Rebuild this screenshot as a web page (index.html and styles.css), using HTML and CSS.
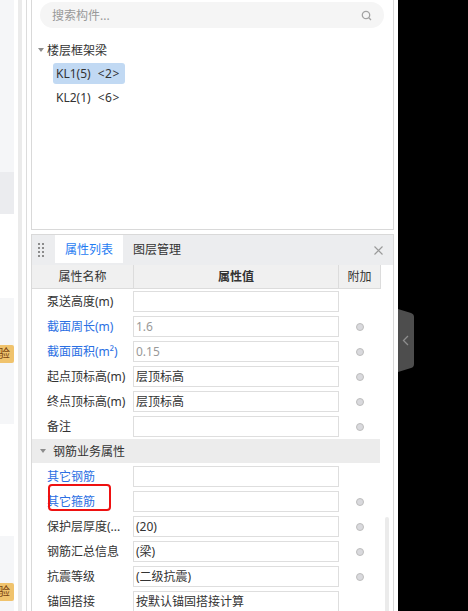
FILE: index.html
```html
<!DOCTYPE html>
<html lang="zh">
<head>
<meta charset="utf-8">
<title>属性列表</title>
<link rel="stylesheet" href="styles.css">
</head>
<body>
<div class="shell">
  <aside class="side">
    <div class="s s-a"></div>
    <div class="s s-b"></div>
    <div class="s s-c"></div>
    <div class="s s-d"><span class="badge">验</span></div>
    <div class="s s-e"></div>
    <div class="s s-f"><span class="badge">验</span></div>
  </aside>
  <div class="rails"><i class="band"></i><i class="line"></i></div>
  <main class="main">
    <section class="tree-panel">
      <div class="search">
        <span class="search-text">搜索构件...</span>
        <svg class="search-icon" width="11" height="11" viewBox="0 0 11 11"><circle cx="5" cy="5" r="3.7" fill="none" stroke="#a3a3a3" stroke-width="1.3"/><path d="M7.8 7.8 10 10" stroke="#a3a3a3" stroke-width="1.3"/></svg>
      </div>
      <div class="tree-head"><i class="caret"></i><span>楼层框架梁</span></div>
      <div class="tree-item selected">KL1(5)<span class="tag">&lt;2&gt;</span></div>
      <div class="tree-item">KL2(1)<span class="tag">&lt;6&gt;</span></div>
    </section>
    <section class="prop-panel">
      <div class="tabbar">
        <svg class="grip" width="6" height="15" viewBox="0 0 6 15"><g fill="#8c8c8c"><rect width="2" height="2"/><rect x="4" width="2" height="2"/><rect y="4" width="2" height="2"/><rect x="4" y="4" width="2" height="2"/><rect y="8" width="2" height="2"/><rect x="4" y="8" width="2" height="2"/><rect y="12" width="2" height="2"/><rect x="4" y="12" width="2" height="2"/></g></svg>
        <div class="tab active">属性列表</div>
        <div class="tab">图层管理</div>
        <svg class="close" width="9" height="9" viewBox="0 0 9 9"><path d="M.5.5l8 8M8.500.5l-8 8" stroke="#9a9a9a" stroke-width="1.1" fill="none"/></svg>
      </div>
      <div class="grid head">
        <div class="hc">属性名称</div>
        <div class="hc strong">属性值</div>
        <div class="hc last">附加</div>
      </div>
      <div class="grid row"><div class="label">泵送高度(m)</div><div class="input"></div><div class="add"></div></div>
      <div class="grid row"><div class="label link">截面周长(m)</div><div class="input muted">1.6</div><div class="add"><i class="dot"></i></div></div>
      <div class="grid row"><div class="label link">截面面积(m²)</div><div class="input muted">0.15</div><div class="add"><i class="dot"></i></div></div>
      <div class="grid row"><div class="label">起点顶标高(m)</div><div class="input">层顶标高</div><div class="add"><i class="dot"></i></div></div>
      <div class="grid row"><div class="label">终点顶标高(m)</div><div class="input">层顶标高</div><div class="add"><i class="dot"></i></div></div>
      <div class="grid row"><div class="label">备注</div><div class="input"></div><div class="add"><i class="dot"></i></div></div>
      <div class="section-row"><i class="caret"></i><span>钢筋业务属性</span></div>
      <div class="grid row"><div class="label link">其它钢筋</div><div class="input"></div><div class="add"></div></div>
      <div class="grid row"><div class="label link">其它箍筋<span class="mark"></span></div><div class="input"></div><div class="add"><i class="dot"></i></div></div>
      <div class="grid row"><div class="label">保护层厚度(...</div><div class="input">(20)</div><div class="add"><i class="dot"></i></div></div>
      <div class="grid row"><div class="label">钢筋汇总信息</div><div class="input">(梁)</div><div class="add"><i class="dot"></i></div></div>
      <div class="grid row"><div class="label">抗震等级</div><div class="input">(二级抗震)</div><div class="add"><i class="dot"></i></div></div>
      <div class="grid row"><div class="label">锚固搭接</div><div class="input">按默认锚固搭接计算</div><div class="add"></div></div>
      <div class="scrollbar"></div>
    </section>
  </main>
  <div class="backdrop">
    <svg class="handle" width="16" height="63" viewBox="0 0 16 63"><path d="M0 0 13 4Q16 5 16 8V55Q16 58 13 59L0 63Z" fill="#4d4d4d"/><path d="M10 27 5.500 31.500 10 36" fill="none" stroke="#8e8e8e" stroke-width="1.3"/></svg>
  </div>
</div>
</body>
</html>
```
FILE: styles.css
```css
* { box-sizing: border-box; }
html, body { margin: 0; padding: 0; }
body {
  font-family: "Noto Sans", "Noto Sans CJK SC", sans-serif;
  font-size: 12px;
  color: #333;
  background: #000;
}
.shell {
  display: flex;
  width: 468px;
  height: 611px;
  overflow: hidden;
  background: #000;
}
.side { width: 14px; flex: none; background: #fff; }
.s { overflow: hidden; }
.s-a { height: 172px; background: #f5f6f8; }
.s-b { height: 42px; background: #ebecef; }
.s-c { height: 84px; background: #fff; }
.s-d { height: 126px; padding-top: 47px; background: #f5f6f8; }
.s-e { height: 112px; background: #fff; }
.s-f { height: 75px; padding-top: 47px; background: #f5f6f8; }
.badge {
  display: block;
  width: 14px;
  height: 18px;
  line-height: 18px;
  text-indent: -2px;
  white-space: nowrap;
  overflow: hidden;
  color: #7a4510;
  background: #f0c36d;
  border-radius: 0 2px 2px 0;
}
.rails {
  display: flex;
  flex: none;
  width: 17px;
  padding-left: 4px;
  background: #fff;
}
.band { width: 4px; background: #ebebeb; }
.line { width: 1px; margin-left: 4px; background: #dcdcdc; }
.main {
  flex: none;
  width: 367px;
  padding-right: 4px;
  background: #fff;
}
.tree-panel {
  height: 230px;
  padding: 2px 9px 0 8px;
  border: 1px solid #d9d9d9;
  border-width: 0 1px 1px 1px;
}
.search {
  display: flex;
  align-items: center;
  justify-content: space-between;
  width: 344px;
  height: 26px;
  padding: 0 12px;
  background: #f5f5f5;
  border-radius: 13px;
}
.search-text { color: #999; }
.tree-head {
  display: flex;
  align-items: center;
  gap: 3px;
  height: 20px;
  margin-top: 12px;
  margin-left: -2px;
}
.caret {
  width: 0;
  height: 0;
  border: 3px solid transparent;
  border-top: 4px solid #8c8c8c;
  border-bottom: 0;
}
.tree-item {
  width: 72px;
  height: 21px;
  margin: 3px 0 3px 13px;
  padding-left: 3px;
  line-height: 21px;
  border-radius: 3px;
  white-space: nowrap;
}
.tree-item.selected { background: #c1d9f3; }
.tag { margin-left: 7px; letter-spacing: 0.5px; }
.prop-panel {
  position: relative;
  height: 377px;
  margin-top: 4px;
  overflow: hidden;
  border: 1px solid #d9d9d9;
  border-bottom: 0;
}
.tabbar {
  display: flex;
  align-items: stretch;
  height: 30px;
  padding-right: 10px;
  background: #ecedef;
}
.grip { align-self: center; margin: 0 11px 0 6px; }
.tab {
  width: 68px;
  height: 28px;
  line-height: 29px;
  text-align: center;
}
.tab.active { color: #1f7cf2; background: #fff; }
.close { align-self: center; margin-left: auto; }
.grid {
  display: grid;
  grid-template-columns: 101px 206px 42px;
  width: 349px;
}
.head {
  height: 24px;
  background: #f0f0f0;
  border-bottom: 1px solid #dcdcdc;
}
.hc {
  line-height: 23px;
  text-align: center;
}
.hc.strong { font-weight: 700; border-left: 1px solid #dcdcdc; border-right: 1px solid #dcdcdc; }
.hc.last { border-right: 1px solid #dcdcdc; }
.row { height: 25px; }
.label {
  position: relative;
  padding-left: 15px;
  line-height: 25px;
  white-space: nowrap;
}
.link { color: #2b6fe3; }
.mark {
  position: absolute;
  left: 16px;
  top: -5px;
  width: 63px;
  height: 27px;
  border: 2px solid #ee1111;
  border-radius: 4px;
}
.input {
  height: 21px;
  margin-top: 2px;
  padding-left: 2px;
  line-height: 19px;
  background: #fff;
  border: 1px solid #dedede;
  white-space: nowrap;
  overflow: hidden;
}
.muted { color: #999; }
.add {
  display: flex;
  align-items: center;
  justify-content: center;
}
.dot {
  width: 8px;
  height: 8px;
  background: #d9d9dd;
  border: 1px solid #bdbdbd;
  border-radius: 50%;
}
.section-row {
  display: flex;
  align-items: center;
  gap: 7px;
  width: 348px;
  height: 24px;
  margin-bottom: 1px;
  padding-left: 8px;
  background: #ececec;
}
.scrollbar {
  position: absolute;
  top: 282px;
  left: 353px;
  width: 4px;
  height: 100px;
  background: #ebebeb;
  border-radius: 2px 2px 0 0;
}
.backdrop {
  position: relative;
  flex: 1;
  background: #000;
}
.handle { position: absolute; left: 0; top: 309px; }
```
